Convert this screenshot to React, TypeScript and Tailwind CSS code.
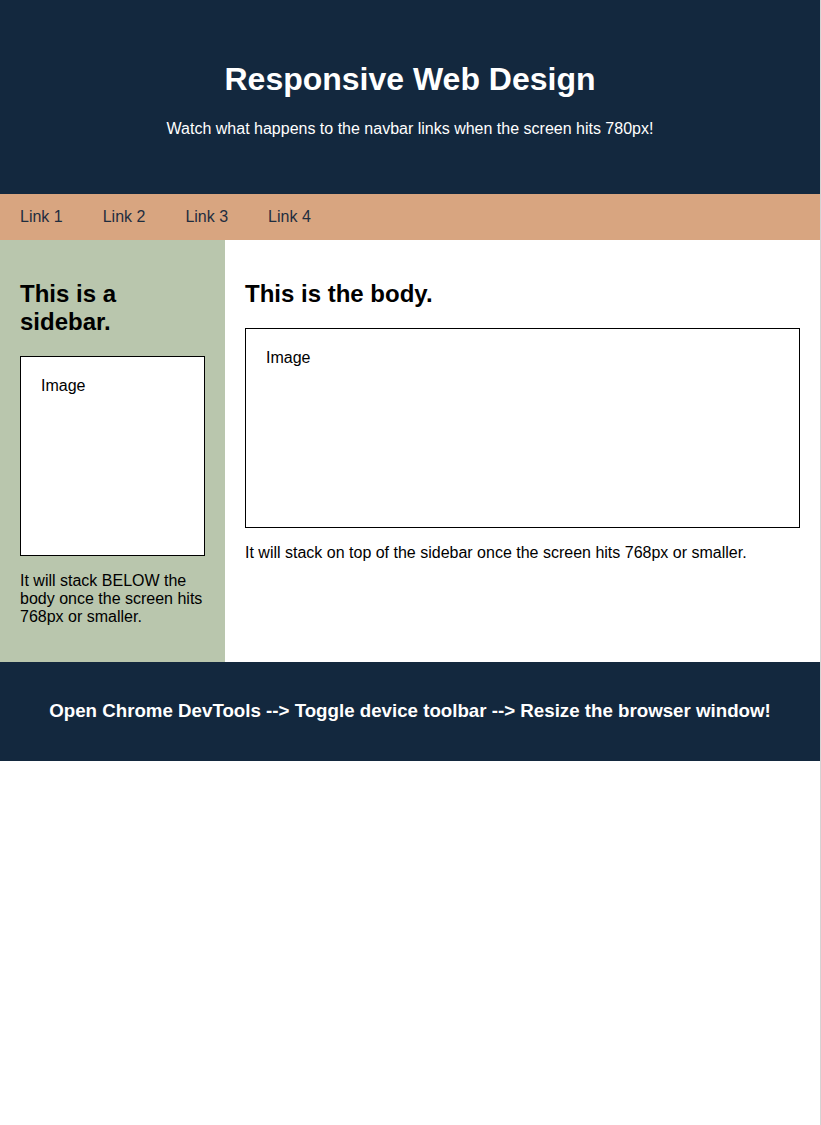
export default function App() {
  return (
    <div className="w-[821px] min-h-[1125px] bg-white font-['Liberation_Sans',Arial,sans-serif]">
      <div className="w-[820px] min-h-[1125px] border-r border-[#d4d4d4] box-content">
        <header className="bg-[#13283e] text-white text-center pt-[61px] pb-[56px]">
          <h1 className="text-[32px] leading-[37px] font-bold mb-[22px]">
            Responsive Web Design
          </h1>
          <p className="text-base leading-[18px]">
            Watch what happens to the navbar links when the screen hits 780px!
          </p>
        </header>

        <nav className="bg-[#d8a580] flex text-base leading-[18px] text-[#1f2d3f] py-[14px] pl-0">
          {["Link 1", "Link 2", "Link 3", "Link 4"].map((l) => (
            <a key={l} href="#" className="px-5">
              {l}
            </a>
          ))}
        </nav>

        <div className="flex">
          <aside className="w-[225px] shrink-0 bg-[#b9c6ad] p-5 text-black">
            <h2 className="text-2xl leading-[28px] font-bold mt-5 mb-5">
              This is a sidebar.
            </h2>
            <div className="border border-black bg-white h-[200px] p-5 text-base leading-[18px]">
              Image
            </div>
            <p className="text-base leading-[18px] mt-4 mb-4">
              It will stack BELOW the body once the screen hits 768px or
              smaller.
            </p>
          </aside>
          <main className="flex-1 p-5 text-black">
            <h2 className="text-2xl leading-[28px] font-bold mt-5 mb-5">
              This is the body.
            </h2>
            <div className="border border-black h-[200px] p-5 text-base leading-[18px]">
              Image
            </div>
            <p className="text-base leading-[18px] mt-4 mb-4">
              It will stack on top of the sidebar once the screen hits 768px or
              smaller.
            </p>
          </main>
        </div>

        <footer className="bg-[#13283e] text-white text-center pt-5 pb-5">
          <h3 className="text-[18.72px] leading-[22px] font-bold mt-[18px] mb-[19px]">
            Open Chrome DevTools --&gt; Toggle device toolbar --&gt; Resize the
            browser window!
          </h3>
        </footer>
      </div>
    </div>
  );
}
